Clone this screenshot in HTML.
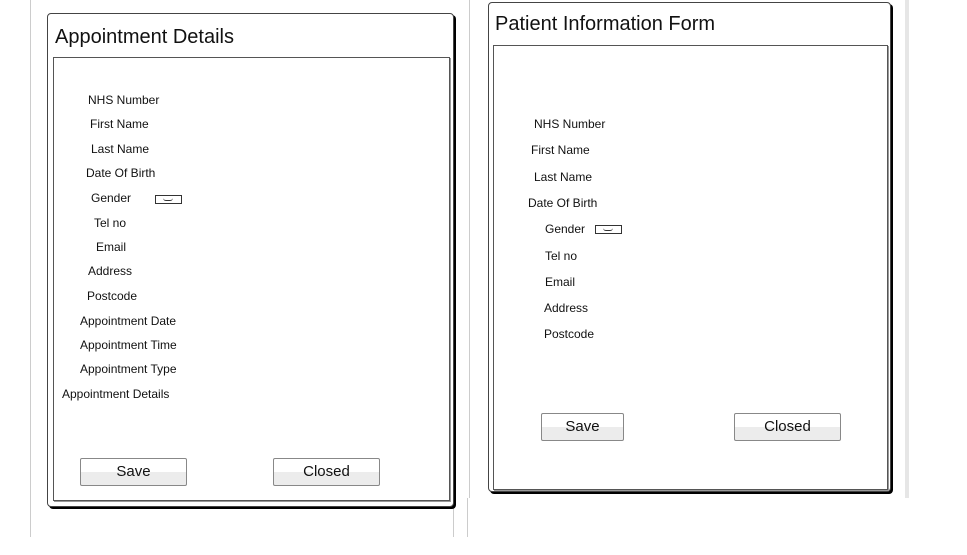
<!DOCTYPE html>
<html><head><meta charset="utf-8"><style>
body{margin:0;width:967px;height:555px;background:#fff;position:relative;overflow:hidden;font-family:"Liberation Sans",sans-serif;color:#111}
.a{position:absolute}
.l{position:absolute;font-size:12px;line-height:14px;white-space:nowrap}
.panel{position:absolute;border:1px solid #444;border-radius:4px;box-shadow:2px 2px 0 #000;background:#fff}
.inner{position:absolute;border:1px solid #555;box-shadow:1px 1px 0 #999}
.t{position:absolute;font-size:20px;white-space:nowrap}
.btn{position:absolute;border:1px solid #888;border-radius:2px;background:linear-gradient(#fff 50%,#ececec 50%);font-size:15px;text-align:center;box-sizing:border-box}
.dd{position:absolute;width:27px;height:9px;border:1px solid #333;box-sizing:border-box}
.dd:after{content:"";position:absolute;left:7px;top:2px;width:10px;height:2px;border-bottom:1px solid #333;border-radius:0 0 6px 6px}
</style></head><body>
<div class="a" style="left:30px;top:0;width:1px;height:537px;background:#ccc"></div>
<div class="a" style="left:469px;top:0;width:1px;height:498px;background:#ccc"></div>
<div class="a" style="left:467px;top:498px;width:1px;height:39px;background:#ccc"></div>
<div class="a" style="left:453px;top:498px;width:1px;height:39px;background:#ccc"></div>
<div class="a" style="left:905px;top:0;width:4px;height:498px;background:#e6e6e6"></div>

<div class="panel" style="left:47px;top:13px;width:405px;height:492px"></div>
<div class="t" style="left:55px;top:26px">Appointment Details</div>
<div class="inner" style="left:53px;top:57px;width:395px;height:442px"></div>
<div class="l" style="left:88px;top:93px">NHS Number</div>
<div class="l" style="left:90px;top:117px">First Name</div>
<div class="l" style="left:91px;top:142px">Last Name</div>
<div class="l" style="left:86px;top:166px">Date Of Birth</div>
<div class="l" style="left:91px;top:191px">Gender</div>
<div class="dd" style="left:155px;top:195px"></div>
<div class="l" style="left:94px;top:216px">Tel no</div>
<div class="l" style="left:96px;top:240px">Email</div>
<div class="l" style="left:88px;top:264px">Address</div>
<div class="l" style="left:87px;top:289px">Postcode</div>
<div class="l" style="left:80px;top:314px">Appointment Date</div>
<div class="l" style="left:80px;top:338px">Appointment Time</div>
<div class="l" style="left:80px;top:362px">Appointment Type</div>
<div class="l" style="left:62px;top:387px">Appointment Details</div>
<div class="btn" style="left:80px;top:458px;width:107px;height:28px;line-height:26px">Save</div>
<div class="btn" style="left:273px;top:458px;width:107px;height:28px;line-height:26px">Closed</div>

<div class="panel" style="left:488px;top:2px;width:401px;height:488px"></div>
<div class="t" style="left:495px;top:13px">Patient Information Form</div>
<div class="inner" style="left:493px;top:45px;width:393px;height:443px"></div>
<div class="l" style="left:534px;top:117px">NHS Number</div>
<div class="l" style="left:531px;top:143px">First Name</div>
<div class="l" style="left:534px;top:170px">Last Name</div>
<div class="l" style="left:528px;top:196px">Date Of Birth</div>
<div class="l" style="left:545px;top:222px">Gender</div>
<div class="dd" style="left:595px;top:225px"></div>
<div class="l" style="left:545px;top:249px">Tel no</div>
<div class="l" style="left:545px;top:275px">Email</div>
<div class="l" style="left:544px;top:301px">Address</div>
<div class="l" style="left:544px;top:327px">Postcode</div>
<div class="btn" style="left:541px;top:413px;width:83px;height:28px;line-height:26px">Save</div>
<div class="btn" style="left:734px;top:413px;width:107px;height:28px;line-height:26px">Closed</div>
</body></html>
